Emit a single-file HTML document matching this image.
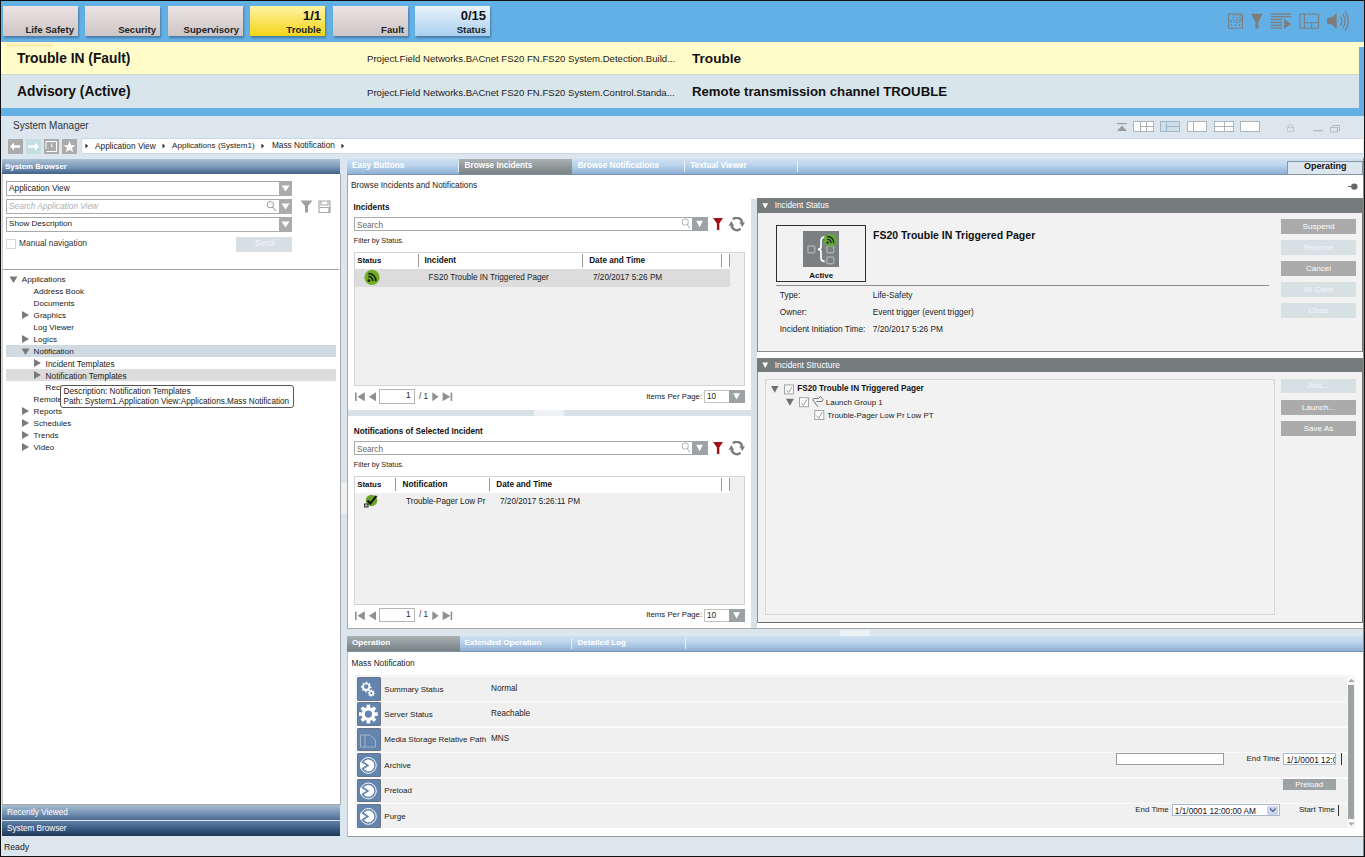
<!DOCTYPE html>
<html><head><meta charset="utf-8">
<style>
*{margin:0;padding:0;box-sizing:border-box}
html,body{width:1365px;height:857px;overflow:hidden}
body{position:relative;background:#dbe6ee;font-family:"Liberation Sans",sans-serif;color:#1a1a1a;font-size:8px}
.a{position:absolute}
.t{position:absolute;white-space:nowrap;line-height:1}
/* top bar */
#topbar{left:0;top:0;width:1365px;height:42px;background:#63b0e6;border-top:1px solid #111;border-left:1px solid #111}
.btn{position:absolute;top:6px;width:75px;height:30px;background:linear-gradient(#ece4e4,#cdc4c4);box-shadow:1px 2px 2px rgba(40,60,90,.45)}
.btn .l{position:absolute;right:4px;top:18.5px;line-height:1;font-weight:bold;font-size:9.6px;color:#222;white-space:nowrap}
.btn .n{position:absolute;right:4px;top:2.6px;line-height:1;font-weight:bold;font-size:13px;color:#111;white-space:nowrap}
.ico{position:absolute;fill:#7b7b7b;stroke:#7b7b7b}
</style></head><body>
<div class="a" style="left:0;top:0;width:1px;height:857px;background:#111;z-index:50"></div>
<div class="a" style="left:0;top:0;width:1365px;height:1px;background:#111;z-index:50"></div>
<div class="a" style="left:0;top:856px;width:1365px;height:1px;background:#111;z-index:50"></div>

<!-- TOP BAR -->
<div class="a" style="left:0;top:0;width:1365px;height:42px;background:#63b0e6"></div>
<div class="btn" style="left:3px"><span class="l">Life Safety</span></div>
<div class="btn" style="left:85px"><span class="l">Security</span></div>
<div class="btn" style="left:168px"><span class="l">Supervisory</span></div>
<div class="btn" style="left:250px;background:linear-gradient(#fff4a6,#f2d516)"><span class="n">1/1</span><span class="l">Trouble</span></div>
<div class="btn" style="left:333px"><span class="l">Fault</span></div>
<div class="btn" style="left:415px;background:linear-gradient(#eaf3fb,#a9cff0)"><span class="n">0/15</span><span class="l">Status</span></div>

<!-- top right icons -->
<svg class="a" style="left:1220px;top:8px" width="140" height="28" viewBox="1220 8 140 28">
 <g stroke="#7d7d7d" fill="none" stroke-width="1.1">
  <rect x="1228.7" y="14" width="13.8" height="14.3" rx="0.6"/>
  <circle cx="1237.6" cy="18.4" r="4.3" stroke-dasharray="1.4 0.8"/>
  <rect x="1299.8" y="14" width="18.8" height="14.2" rx="0.6"/>
  <path d="M1304.4 14V28.2 M1304.4 22.7H1318.6 M1311.5 22.7V28.2"/>
  <path d="M1340.3 16.5Q1343.6 21.2 1340.3 25.9" stroke-width="1.2"/>
  <path d="M1342.6 13.8Q1347.6 21 1342.6 28.3" stroke-width="1.2"/>
  <path d="M1345 11.3Q1351.8 21 1345 30.8" stroke-width="1.2"/>
 </g>
 <text x="1235.2" y="20.9" font-family="Liberation Sans" font-size="5.5" fill="#7d7d7d">12</text>
 <g fill="#7d7d7d">
  <circle cx="1231.2" cy="21.4" r="0.9"/><circle cx="1231.2" cy="25.1" r="0.9"/><circle cx="1235.5" cy="25.1" r="0.9"/><circle cx="1239.7" cy="25.1" r="0.9"/>
  <path d="M1251 13.8H1262.7L1258.4 22V28.4H1255.5V22Z"/>
  <rect x="1270.7" y="13.5" width="20.5" height="1.3"/><rect x="1270.7" y="16.1" width="20.5" height="1.3"/>
  <rect x="1270.7" y="18.9" width="11.3" height="1.3"/><rect x="1270.7" y="21.8" width="11.3" height="1.3"/><rect x="1270.7" y="24.7" width="11.3" height="1.3"/><rect x="1270.7" y="27.4" width="11.3" height="1.3"/>
  <path d="M1284 19.1L1291.2 23.9L1284 28.7Z"/>
  <path d="M1327.1 17.4H1331.5L1336.7 13V28.9L1331.5 24.2H1327.1Z"/>
 </g>
</svg>
<div class="a" style="left:1364px;top:0;width:1px;height:857px;background:#111;z-index:50"></div>
<!-- alert rows -->
<div class="a" style="left:1px;top:42px;width:1364px;height:32px;background:#fffcc9"></div>
<div class="a" style="left:1359px;top:47px;width:6px;height:69px;background:#63b0e6"></div>
<div class="a" style="left:1px;top:74px;width:1358px;height:34px;background:#d8e5eb;border-top:1px solid #cfd6c8"></div>
<div class="a" style="left:1px;top:108px;width:1364px;height:8px;background:#63b0e6"></div>
<div class="a" style="left:7px;top:44px;width:46px;height:3px;background:#fcecb0"></div>
<div class="t" style="left:17px;top:52px;font-size:13.8px;font-weight:bold;color:#111">Trouble IN (Fault)</div>
<div class="t" style="left:17px;top:85px;font-size:13.8px;font-weight:bold;color:#111">Advisory (Active)</div>
<div class="t" style="left:367px;top:54.2px;font-size:9.6px;color:#222">Project.Field Networks.BACnet FS20 FN.FS20 System.Detection.Build...</div>
<div class="t" style="left:367px;top:87.5px;font-size:9.6px;color:#222">Project.Field Networks.BACnet FS20 FN.FS20 System.Control.Standa...</div>
<div class="t" style="left:692px;top:52px;font-size:13.6px;font-weight:bold;color:#111">Trouble</div>
<div class="t" style="left:692px;top:85px;font-size:13.2px;font-weight:bold;color:#111">Remote transmission channel TROUBLE</div>

<!-- System manager bar -->
<div class="t" style="left:13px;top:121.2px;font-size:10px;color:#333">System Manager</div>
<!-- window icons -->
<svg class="a" style="left:1115px;top:119px" width="230" height="16" viewBox="1115 119 230 16">
 <g fill="#9a9a9a"><rect x="1117" y="123" width="10" height="1.2"/><path d="M1117 131 L1122 125.5 L1127 131Z"/></g>
 <g fill="#fdfdfd" stroke="#aeb4b8" stroke-width="1">
  <rect x="1133.5" y="121.5" width="20" height="10"/>
  <rect x="1160.5" y="121.5" width="19" height="10" fill="#cfdfea" stroke="#9fb7c9"/>
  <rect x="1187.5" y="121.5" width="19" height="10"/>
  <rect x="1214.5" y="121.5" width="19" height="10"/>
  <rect x="1240.5" y="121.5" width="19" height="10"/>
 </g>
 <g stroke="#aeb4b8" stroke-width="1" fill="none">
  <path d="M1140.5 121.5V131.5 M1140.5 126.5H1153.5 M1146.5 121.5V131.5"/>
  <path d="M1166.5 121.5V131.5 M1166.5 126.5H1179.5" stroke="#9fb7c9"/>
  <path d="M1193.5 121.5V131.5"/>
  <path d="M1214.5 126.5H1233.5 M1224.5 121.5V131.5"/>
 </g>
 <g stroke="#c4c8cb" fill="none" stroke-width="1">
  <rect x="1287.5" y="127.5" width="6" height="4"/><path d="M1288.5 127.5V125.5Q1290.5 123.5 1292.5 125.5V127.5"/>
  <rect x="1330.5" y="127.5" width="7" height="4.5" stroke="#b8bcc0"/><path d="M1332.5 127.5V125.5H1339.5V130.5H1337.5" stroke="#b8bcc0"/>
 </g>
 <rect x="1313" y="130" width="10" height="1.3" fill="#b8bcc0"/>
</svg>
<!-- nav buttons -->
<div class="a" style="left:8px;top:139px;width:15px;height:15px;background:#ababab"></div>
<div class="a" style="left:26px;top:139px;width:15px;height:15px;background:#c5dee4"></div>
<div class="a" style="left:44px;top:139px;width:15px;height:15px;background:#ababab"></div>
<div class="a" style="left:62px;top:139px;width:15px;height:15px;background:#ababab"></div>
<svg class="a" style="left:8px;top:139px" width="70" height="15" viewBox="8 139 70 15">
 <path d="M10 146.5 L14 142.5 V145.3 H20 V147.7 H14 V150.5Z" fill="#fff"/>
 <path d="M39 146.5 L35 142.5 V145.3 H28 V147.7 H35 V150.5Z" fill="#fff"/>
 <path d="M46 149 V141.5 H56.5 V151.5 H46.5" stroke="#fff" stroke-width="1" fill="none"/><path d="M51.5 143.5V146.5H53" stroke="#fff" stroke-width="0.8" fill="none"/>
 <path d="M69.5 141 L71 145.2 L75.5 145.3 L72 148 L73.3 152.3 L69.5 149.7 L65.7 152.3 L67 148 L63.5 145.3 L68 145.2Z" fill="#fff"/>
</svg>
<!-- breadcrumb -->
<div class="a" style="left:80.5px;top:138px;width:1282.5px;height:16px;background:#fff;border:1px solid #c9d8e4;border-right:none;border-radius:2px 0 0 2px"></div>
<svg class="a" style="left:80px;top:138px" width="300" height="16" viewBox="80 138 300 16">
 <g fill="#222"><path d="M85.5 143.5 L88 146 L85.5 148.5Z"/><path d="M162.5 143.5 L165 146 L162.5 148.5Z"/><path d="M261.5 143.5 L264 146 L261.5 148.5Z"/><path d="M341.5 143.5 L344 146 L341.5 148.5Z"/></g>
</svg>
<div class="t" style="left:95px;top:141.5px;font-size:8.3px;color:#222">Application View</div>
<div class="t" style="left:172px;top:141.5px;font-size:8.1px;color:#222">Applications (System1)</div>
<div class="t" style="left:272px;top:141.5px;font-size:8.25px;color:#222">Mass Notification</div>

<!-- LEFT PANEL -->
<div class="a" style="left:2px;top:158.5px;width:338px;height:15.5px;background:linear-gradient(#abc0d4,#7f9cbb 50%,#3f6089)"></div>
<div class="t" style="left:5px;top:162.5px;font-size:7.9px;font-weight:bold;color:#fff">System Browser</div>
<div class="a" style="left:2px;top:174px;width:339px;height:631px;background:#fff;border-right:1px solid #a9a9a9;border-bottom:1px solid #a9a9a9;border-left:1px solid #c8c8c8"></div>
<!-- dropdowns -->
<div class="a" style="left:6px;top:181px;width:286px;height:15px;border:1px solid #aaa;background:#fff"></div>
<div class="a" style="left:279px;top:181px;width:13px;height:15px;background:#ababab"></div>
<div class="a" style="left:6px;top:199px;width:286px;height:15px;border:1px solid #aaa;background:#fff"></div>
<div class="a" style="left:279px;top:199px;width:13px;height:15px;background:#ababab"></div>
<div class="a" style="left:6px;top:217px;width:286px;height:15px;border:1px solid #aaa;background:#fff"></div>
<div class="a" style="left:279px;top:217px;width:13px;height:15px;background:#ababab"></div>
<svg class="a" style="left:0;top:175px" width="340" height="80" viewBox="0 175 340 80">
 <g fill="#fff"><path d="M281.5 185.5H289.5L285.5 191.5Z"/><path d="M281.5 203.5H289.5L285.5 209.5Z"/><path d="M281.5 221.5H289.5L285.5 227.5Z"/></g>
 <circle cx="270.3" cy="204.6" r="3.2" stroke="#9a9a9a" stroke-width="1" fill="none"/><path d="M272.5 207L276 211" stroke="#9a9a9a" stroke-width="1.1"/>
 <path d="M300.5 200.5H312.5L308 206V212.5H305V206Z" fill="#a0a0a0"/>
 <path d="M319 201H330V212.5H319Z M321 201.5V205H328V201.5 M320 207.5H329V212" stroke="#a8a8a8" stroke-width="1.2" fill="none"/>
 <rect x="6.5" y="239.5" width="9" height="9" fill="#fff" stroke="#d6d6d6"/>
</svg>
<div class="t" style="left:9px;top:184px;font-size:8.3px;color:#222">Application View</div>
<div class="t" style="left:9px;top:202px;font-size:8.3px;color:#b0b0b0;font-style:italic">Search Application View</div>
<div class="t" style="left:9px;top:220px;font-size:8.1px;color:#222">Show Description</div>
<div class="t" style="left:19px;top:239px;font-size:8.4px;color:#333">Manual navigation</div>
<div class="a" style="left:236px;top:237px;width:56px;height:14.5px;background:#d6e0e4"></div>
<div class="t" style="left:255px;top:240px;font-size:8.2px;color:#f4f7f8">Send</div>
<div class="a" style="left:3px;top:269px;width:336px;height:1px;background:#a3a3a3"></div>
<!-- tree -->
<div class="a" style="left:6px;top:345px;width:330px;height:12px;background:#cfdae2"></div>
<div class="a" style="left:6px;top:369px;width:330px;height:12px;background:#dcdcdc"></div>
<svg class="a" style="left:0;top:270px" width="60" height="190" viewBox="0 270 60 190">
 <g fill="#7a7a7a">
  <path d="M9.5 276.5H17.5L13.5 283Z"/>
  <path d="M22 311V319L29 315Z"/>
  <path d="M22 335V343L29 339Z"/>
  <path d="M21.5 348.5H29.5L25.5 355Z"/>
  <path d="M34 359V367L41 363Z"/>
  <path d="M34 371V379L41 375Z"/>
  <path d="M22 407V415L29 411Z"/>
  <path d="M22 419V427L29 423Z"/>
  <path d="M22 431V439L29 435Z"/>
  <path d="M22 443V451L29 447Z"/>
 </g>
</svg>
<div class="t" style="left:21.8px;top:276px;font-size:8.1px;color:#222">Applications</div>
<div class="t" style="left:33.6px;top:288px;font-size:8.1px;color:#222">Address Book</div>
<div class="t" style="left:33.6px;top:300px;font-size:8.1px;color:#222">Documents</div>
<div class="t" style="left:33.6px;top:312px;font-size:8.1px;color:#222">Graphics</div>
<div class="t" style="left:33.6px;top:324px;font-size:8.1px;color:#222">Log Viewer</div>
<div class="t" style="left:33.6px;top:336px;font-size:8.1px;color:#222">Logics</div>
<div class="t" style="left:33.6px;top:348px;font-size:8.1px;color:#222">Notification</div>
<div class="t" style="left:45.6px;top:360px;font-size:8.3px;color:#222">Incident Templates</div>
<div class="t" style="left:45.6px;top:372px;font-size:8.3px;color:#222">Notification Templates</div>
<div class="t" style="left:45.6px;top:384px;font-size:8.1px;color:#222">Recipients</div>
<div class="t" style="left:33.6px;top:396px;font-size:8.1px;color:#222">Remote Notification</div>
<div class="t" style="left:33.6px;top:408px;font-size:8.1px;color:#222">Reports</div>
<div class="t" style="left:33.6px;top:420px;font-size:8.1px;color:#222">Schedules</div>
<div class="t" style="left:33.6px;top:432px;font-size:8.1px;color:#222">Trends</div>
<div class="t" style="left:33.6px;top:444px;font-size:8.1px;color:#222">Video</div>
<div class="a" style="left:60px;top:384.5px;width:234px;height:23px;background:#fff;border:1px solid #555;border-radius:3px"></div>
<div class="t" style="left:63.5px;top:386.5px;font-size:8.3px;color:#222">Description: Notification Templates</div>
<div class="t" style="left:63.5px;top:397.5px;font-size:8.17px;color:#222">Path: System1.Application View:Applications.Mass Notification</div>
<!-- bottom bars -->
<div class="a" style="left:2px;top:805px;width:338px;height:15px;background:linear-gradient(#a7bcd1,#7592b3 55%,#4a6a92)"></div>
<div class="t" style="left:7px;top:809px;font-size:8.2px;color:#fff">Recently Viewed</div>
<div class="a" style="left:2px;top:821px;width:338px;height:15px;background:linear-gradient(#5f7fa5,#3c5c84 50%,#1f3858)"></div>
<div class="t" style="left:7px;top:825px;font-size:8.2px;color:#fff">System Browser</div>
<div class="t" style="left:4px;top:843px;font-size:8.7px;color:#222">Ready</div>

<!-- MIDDLE / TAB BAR -->
<div class="a" style="left:347px;top:158.5px;width:1016px;height:16px;background:linear-gradient(#cfe1f2,#bcd4ec 40%,#8fb1d5);border-bottom:1px solid #7b93ab"></div>
<div class="a" style="left:459px;top:158.5px;width:113px;height:15.5px;background:linear-gradient(#abb2b4,#8c9597 55%,#798385)"></div>
<div class="a" style="left:458px;top:161px;width:1px;height:11px;background:#e8f0f8"></div>
<div class="a" style="left:684px;top:161px;width:1px;height:11px;background:#e8f0f8"></div>
<div class="a" style="left:797px;top:161px;width:1px;height:11px;background:#e8f0f8"></div>
<div class="t" style="left:352px;top:161.5px;font-size:8.2px;font-weight:bold;color:#fff">Easy Buttons</div>
<div class="t" style="left:464.6px;top:161.5px;font-size:8.2px;font-weight:bold;color:#fff">Browse Incidents</div>
<div class="t" style="left:577.7px;top:161.5px;font-size:8.2px;font-weight:bold;color:#fff">Browse Notifications</div>
<div class="t" style="left:690.2px;top:161.5px;font-size:8.2px;font-weight:bold;color:#fff">Textual Viewer</div>
<div class="a" style="left:1287px;top:160.5px;width:76px;height:14px;background:#dce6ee;border:1px solid #8796a2"></div>
<div class="t" style="left:1304px;top:162px;font-size:9px;font-weight:bold;color:#111">Operating</div>

<!-- middle content -->
<div class="a" style="left:347px;top:174.5px;width:1016px;height:454px;background:#fff;border-left:1px solid #a0a6aa"></div>
<div class="a" style="left:341px;top:483px;width:5.5px;height:30px;background:#f0f1f2"></div>
<div class="a" style="left:1363px;top:158px;width:2px;height:700px;background:#8a8a8a"></div>
<div class="t" style="left:351px;top:182px;font-size:8.25px;color:#222">Browse Incidents and Notifications</div>
<svg class="a" style="left:1345px;top:180px" width="16" height="14" viewBox="1345 180 16 14"><path d="M1348 186.5H1353" stroke="#666" stroke-width="1"/><circle cx="1354.3" cy="186.6" r="3.2" fill="#666"/></svg>
<!-- splitters -->
<div class="a" style="left:751px;top:199px;width:6px;height:429.5px;background:#d7e1e6"></div>
<div class="a" style="left:348px;top:410px;width:403px;height:6px;background:#d7e1e6"></div>
<div class="a" style="left:534px;top:410px;width:30px;height:6px;background:#eef2f4"></div>

<!-- incidents section -->
<div class="t" style="left:353.5px;top:203.5px;font-size:8.2px;font-weight:bold;color:#111">Incidents</div>
<div class="a" style="left:354px;top:217px;width:353.5px;height:14px;border:1px solid #aaa;background:#fff"></div>
<div class="a" style="left:692px;top:217px;width:15.5px;height:14px;background:#9da2a4"></div>
<div class="t" style="left:357px;top:221.5px;font-size:8.2px;color:#666">Search</div>
<div class="t" style="left:353.8px;top:237px;font-size:7.2px;color:#222">Filter by Status.</div>
<div class="a" style="left:354px;top:251.5px;width:391px;height:134px;background:#f0f0f0;border:1px solid #d4d4d4"></div>
<div class="a" style="left:355px;top:252.5px;width:375px;height:16px;background:#fff"></div>
<div class="a" style="left:355px;top:268.5px;width:375px;height:18px;background:#dcdcdc"></div>
<div class="a" style="left:417.5px;top:254px;width:1px;height:13px;background:#999"></div>
<div class="a" style="left:581.5px;top:254px;width:1px;height:13px;background:#999"></div>
<div class="a" style="left:721px;top:254px;width:1px;height:13px;background:#999"></div>
<div class="a" style="left:729px;top:254px;width:1px;height:13px;background:#999"></div>
<div class="t" style="left:357.2px;top:257px;font-size:7.9px;font-weight:bold;color:#111">Status</div>
<div class="t" style="left:424.6px;top:257px;font-size:8.2px;font-weight:bold;color:#111">Incident</div>
<div class="t" style="left:589.2px;top:257px;font-size:8.2px;font-weight:bold;color:#111">Date and Time</div>
<div class="t" style="left:428.6px;top:274px;font-size:8.16px;color:#222">FS20 Trouble IN Triggered Pager</div>
<div class="t" style="left:593px;top:274px;font-size:8.2px;color:#222">7/20/2017 5:26 PM</div>
<svg class="a" style="left:364px;top:269px" width="17" height="17" viewBox="0 0 17 17"><circle cx="8" cy="8.3" r="7.6" fill="#72ad22"/><circle cx="5" cy="11.5" r="1.5" fill="#1a2a10"/><path d="M4.3 7.7A4 4 0 0 1 8.8 12.2M4.3 4.6A7.1 7.1 0 0 1 11.9 12.2" stroke="#1a2a10" stroke-width="1.7" fill="none"/></svg>

<!-- notifications section -->
<div class="t" style="left:353.8px;top:427.5px;font-size:8.19px;font-weight:bold;color:#111">Notifications of Selected Incident</div>
<div class="a" style="left:354px;top:441px;width:353.5px;height:14px;border:1px solid #aaa;background:#fff"></div>
<div class="a" style="left:692px;top:441px;width:15.5px;height:14px;background:#9da2a4"></div>
<div class="t" style="left:357px;top:445.5px;font-size:8.2px;color:#666">Search</div>
<div class="t" style="left:353.8px;top:461px;font-size:7.2px;color:#222">Filter by Status.</div>
<div class="a" style="left:354px;top:476px;width:391px;height:128.5px;background:#f0f0f0;border:1px solid #d4d4d4"></div>
<div class="a" style="left:355px;top:477px;width:375px;height:16px;background:#fff"></div>
<div class="a" style="left:394.8px;top:478px;width:1px;height:13px;background:#999"></div>
<div class="a" style="left:488.6px;top:478px;width:1px;height:13px;background:#999"></div>
<div class="a" style="left:721px;top:478px;width:1px;height:13px;background:#999"></div>
<div class="a" style="left:729px;top:478px;width:1px;height:13px;background:#999"></div>
<div class="t" style="left:357.2px;top:481px;font-size:7.9px;font-weight:bold;color:#111">Status</div>
<div class="t" style="left:402.5px;top:481px;font-size:8.2px;font-weight:bold;color:#111">Notification</div>
<div class="t" style="left:496.3px;top:481px;font-size:8.2px;font-weight:bold;color:#111">Date and Time</div>
<div class="t" style="left:406px;top:498px;font-size:8.16px;color:#222">Trouble-Pager Low Pr</div>
<div class="t" style="left:500px;top:498px;font-size:8.2px;color:#222">7/20/2017 5:26:11 PM</div>
<svg class="a" style="left:363px;top:494px" width="16" height="15" viewBox="0 0 16 15"><circle cx="8.5" cy="6.5" r="5.8" fill="#6ba42a"/><path d="M4.5 6.5L7.3 9.5L13.5 1.8" stroke="#111" stroke-width="2" fill="none"/><rect x="1" y="9.5" width="4.5" height="4" fill="#333"/><rect x="2" y="10.5" width="2.5" height="2" fill="#bbb"/></svg>

<!-- tools & pagers -->
<svg class="a" style="left:680px;top:217px" width="66" height="15" viewBox="680 217 66 15">
 <circle cx="685.2" cy="222" r="3.2" stroke="#a8a8a8" stroke-width="0.9" fill="none"/><path d="M687.3 224.5L690 228.6" stroke="#a8a8a8" stroke-width="0.9"/>
 <path d="M696.3 220.8H702.9L699.6 227.3Z" fill="#fff"/>
 <path d="M713.1 217.9H723L719.3 223.5V230H716.9V223.5Z" fill="#a30f12"/>
 <path d="M733 219.3A5.4 5.4 0 0 1 742.1 222.6" stroke="#7a7f7f" stroke-width="2.4" fill="none"/><path d="M739.4 222.2H745L742.3 227Z" fill="#7a7f7f"/>
 <path d="M740.6 228.7A5.4 5.4 0 0 1 731.5 225.4" stroke="#7a7f7f" stroke-width="2.4" fill="none"/><path d="M728.6 225.8H734.2L731.3 221Z" fill="#7a7f7f"/>
</svg>
<svg class="a" style="left:680px;top:441px" width="66" height="15" viewBox="680 217 66 15">
 <circle cx="685.2" cy="222" r="3.2" stroke="#a8a8a8" stroke-width="0.9" fill="none"/><path d="M687.3 224.5L690 228.6" stroke="#a8a8a8" stroke-width="0.9"/>
 <path d="M696.3 220.8H702.9L699.6 227.3Z" fill="#fff"/>
 <path d="M713.1 217.9H723L719.3 223.5V230H716.9V223.5Z" fill="#a30f12"/>
 <path d="M733 219.3A5.4 5.4 0 0 1 742.1 222.6" stroke="#7a7f7f" stroke-width="2.4" fill="none"/><path d="M739.4 222.2H745L742.3 227Z" fill="#7a7f7f"/>
 <path d="M740.6 228.7A5.4 5.4 0 0 1 731.5 225.4" stroke="#7a7f7f" stroke-width="2.4" fill="none"/><path d="M728.6 225.8H734.2L731.3 221Z" fill="#7a7f7f"/>
</svg>
<div class="a" style="left:379.3px;top:389px;width:36px;height:14.5px;border:1px solid #b5b5b5;background:#fff"></div>
<div class="t" style="left:406px;top:392px;font-size:8.2px;color:#222">1</div>
<div class="t" style="left:419px;top:392.5px;font-size:8.2px;color:#333">/ 1</div>
<svg class="a" style="left:354px;top:389px" width="100" height="15" viewBox="354 389 100 15">
 <g fill="#909090"><rect x="355" y="392.5" width="1.6" height="8.5"/><path d="M364.8 392.3V401.2L357.5 396.8Z"/>
 <path d="M376 392.3V401.2L368.8 396.8Z"/>
 <path d="M432.3 392.3V401.2L438.6 396.8Z"/>
 <path d="M442.6 392.3V401.2L450.4 396.8Z"/><rect x="450.6" y="392.5" width="1.6" height="8.5"/></g>
</svg>
<div class="t" style="left:646.2px;top:392.5px;font-size:7.8px;color:#222">Items Per Page:</div>
<div class="a" style="left:704.2px;top:390px;width:40.6px;height:13px;border:1px solid #c3c3c3;background:#fff"></div>
<div class="a" style="left:729px;top:390px;width:15.8px;height:13px;background:#9ca1a3"></div>
<svg class="a" style="left:729px;top:390px" width="16" height="13" viewBox="0 0 16 13"><path d="M4.2 3.3H11L7.6 9.5Z" fill="#fff"/></svg>
<div class="t" style="left:707px;top:393px;font-size:8.2px;color:#222">10</div>
<div class="a" style="left:379.3px;top:607.5px;width:36px;height:14.5px;border:1px solid #b5b5b5;background:#fff"></div>
<div class="t" style="left:406px;top:610.5px;font-size:8.2px;color:#222">1</div>
<div class="t" style="left:419px;top:611.0px;font-size:8.2px;color:#333">/ 1</div>
<svg class="a" style="left:354px;top:607.5px" width="100" height="15" viewBox="354 389 100 15">
 <g fill="#909090"><rect x="355" y="392.5" width="1.6" height="8.5"/><path d="M364.8 392.3V401.2L357.5 396.8Z"/>
 <path d="M376 392.3V401.2L368.8 396.8Z"/>
 <path d="M432.3 392.3V401.2L438.6 396.8Z"/>
 <path d="M442.6 392.3V401.2L450.4 396.8Z"/><rect x="450.6" y="392.5" width="1.6" height="8.5"/></g>
</svg>
<div class="t" style="left:646.2px;top:611.0px;font-size:7.8px;color:#222">Items Per Page:</div>
<div class="a" style="left:704.2px;top:608.5px;width:40.6px;height:13px;border:1px solid #c3c3c3;background:#fff"></div>
<div class="a" style="left:729px;top:608.5px;width:15.8px;height:13px;background:#9ca1a3"></div>
<svg class="a" style="left:729px;top:608.5px" width="16" height="13" viewBox="0 0 16 13"><path d="M4.2 3.3H11L7.6 9.5Z" fill="#fff"/></svg>
<div class="t" style="left:707px;top:611.5px;font-size:8.2px;color:#222">10</div>
<!-- RIGHT PANEL: incident status -->
<div class="a" style="left:757px;top:198px;width:606px;height:153.5px;background:#f2f2f2;border-left:1px solid #8a8f92;border-right:1px solid #707070;border-bottom:1px solid #8a8a8a"></div>
<div class="a" style="left:757px;top:198px;width:606px;height:15px;background:#767b7e"></div>
<svg class="a" style="left:760px;top:200px" width="12" height="12" viewBox="760 200 12 12"><path d="M762.3 203.3H768.2L765.25 208.6Z" fill="#fff"/></svg>
<div class="t" style="left:774.8px;top:201.5px;font-size:8.17px;color:#fff">Incident Status</div>
<div class="a" style="left:776px;top:225px;width:90px;height:57px;background:#f2f2f2;border:1.3px solid #2e2e2e"></div>
<svg class="a" style="left:803px;top:231px" width="37" height="37" viewBox="0 0 37 37">
 <rect x="0" y="0" width="36" height="36" fill="#7b7f82"/>
 <g stroke="#abaeb0" stroke-width="1.4" fill="none"><rect x="4.9" y="15" width="6.8" height="6.8" rx="1"/><rect x="23.9" y="15" width="6.8" height="6.8" rx="1"/><rect x="23.9" y="26" width="6.8" height="6.8" rx="1"/></g>
 <path d="M21.7 6Q18 6 18 10V15.5Q18 18.4 15 18.4Q18 18.4 18 21.3V26.5Q18 30.4 21.7 30.4" stroke="#fff" stroke-width="1.7" fill="none"/>
 <circle cx="27.3" cy="9.1" r="6.7" fill="#62a83a"/>
 <circle cx="24.6" cy="11.6" r="1.2" fill="#1e2a18"/><path d="M24.1 8.4A3.3 3.3 0 0 1 27.9 12.2M24.1 5.6A6 6 0 0 1 30.7 12.2" stroke="#1e2a18" stroke-width="1.4" fill="none"/>
</svg>
<div class="t" style="left:809.2px;top:271.8px;font-size:8px;font-weight:bold;color:#111">Active</div>
<div class="t" style="left:873px;top:230px;font-size:10.5px;font-weight:bold;color:#111">FS20 Trouble IN Triggered Pager</div>
<div class="a" style="left:776px;top:285px;width:493px;height:1px;background:#8c8c8c"></div>
<div class="t" style="left:779.8px;top:290.5px;font-size:8.4px;color:#222">Type:</div>
<div class="t" style="left:779.8px;top:307.5px;font-size:8.4px;color:#222">Owner:</div>
<div class="t" style="left:779.8px;top:324.5px;font-size:8.4px;color:#222">Incident Initiation Time:</div>
<div class="t" style="left:872.8px;top:290.5px;font-size:8.3px;color:#222">Life-Safety</div>
<div class="t" style="left:872.8px;top:307.5px;font-size:8.3px;color:#222">Event trigger (event trigger)</div>
<div class="t" style="left:872.8px;top:324.5px;font-size:8.3px;color:#222">7/20/2017 5:26 PM</div>
<div class="a" style="left:1281px;top:219px;width:75px;height:15px;background:#ababab"></div>
<div class="a" style="left:1281px;top:240.3px;width:75px;height:15px;background:#d7e1e4"></div>
<div class="a" style="left:1281px;top:261.4px;width:75px;height:15px;background:#ababab"></div>
<div class="a" style="left:1281px;top:282.3px;width:75px;height:15px;background:#d7e1e4"></div>
<div class="a" style="left:1281px;top:303.4px;width:75px;height:15px;background:#d7e1e4"></div>
<div class="t" style="left:1281px;width:75px;text-align:center;top:222.7px;font-size:8.1px;color:#fff">Suspend</div>
<div class="t" style="left:1281px;width:75px;text-align:center;top:244.0px;font-size:8.1px;color:#f3f6f7">Resume</div>
<div class="t" style="left:1281px;width:75px;text-align:center;top:265.1px;font-size:8.1px;color:#fff">Cancel</div>
<div class="t" style="left:1281px;width:75px;text-align:center;top:286.0px;font-size:8.1px;color:#f3f6f7">All Clear</div>
<div class="t" style="left:1281px;width:75px;text-align:center;top:307.1px;font-size:8.1px;color:#f3f6f7">Close</div>

<!-- incident structure -->
<div class="a" style="left:757px;top:357.6px;width:606px;height:265px;background:#f2f2f2;border-left:1px solid #8a8f92;border-right:1px solid #707070;border-bottom:1.3px solid #707070"></div>
<div class="a" style="left:757px;top:357.6px;width:606px;height:14.4px;background:#767b7e"></div>
<svg class="a" style="left:760px;top:359px" width="12" height="12" viewBox="760 359 12 12"><path d="M762.3 362.5H768.2L765.25 367.9Z" fill="#fff"/></svg>
<div class="t" style="left:774.8px;top:360.8px;font-size:8.3px;color:#fff">Incident Structure</div>
<div class="a" style="left:764.5px;top:378.6px;width:510.5px;height:236.5px;border:1px solid #d6d6d6"></div>
<svg class="a" style="left:764px;top:380px" width="70" height="45" viewBox="764 380 70 45">
 <g fill="#707070"><path d="M771.1 385.9H778.4L774.75 392.8Z"/><path d="M786 398.8H793.8L789.9 405.7Z"/></g>
 <g fill="#fbfbfb" stroke="#a5a5a5" stroke-width="1"><rect x="784.5" y="384.9" width="9" height="9"/><rect x="799.5" y="397.7" width="9" height="9"/><rect x="814.8" y="410.5" width="9" height="9"/></g>
 <g stroke="#9aa0a3" stroke-width="1" fill="none"><path d="M786.6 390.2L788.6 392.6L792 386.8"/><path d="M801.3 403L803.4 405.5L806.8 399.5"/><path d="M816.8 415.8L818.8 418.3L822.2 412.3"/></g>
 <path d="M817.7 406.7L812.9 399.7L813.6 398.5H818.7L820.4 396.4L823 399.5L821.9 401.5H816.4" stroke="#6a6a6a" stroke-width="0.9" fill="none" stroke-linejoin="round"/>
</svg>
<div class="t" style="left:797.2px;top:385px;font-size:8.2px;font-weight:bold;color:#111">FS20 Trouble IN Triggered Pager</div>
<div class="t" style="left:825.8px;top:398.8px;font-size:7.95px;color:#222">Launch Group 1</div>
<div class="t" style="left:827.2px;top:411.5px;font-size:7.95px;color:#222">Trouble-Pager Low Pr Low PT</div>
<div class="a" style="left:1281px;top:378.7px;width:75px;height:14.5px;background:#d7e1e4"></div>
<div class="a" style="left:1281px;top:400px;width:75px;height:14.5px;background:#ababab"></div>
<div class="a" style="left:1281px;top:421px;width:75px;height:14.5px;background:#ababab"></div>
<div class="t" style="left:1281px;width:75px;text-align:center;top:382.2px;font-size:8.1px;color:#f3f6f7">Add...</div>
<div class="t" style="left:1281px;width:75px;text-align:center;top:403.5px;font-size:8.1px;color:#fff">Launch...</div>
<div class="t" style="left:1281px;width:75px;text-align:center;top:424.5px;font-size:8.1px;color:#fff">Save As</div>

<!-- OPERATION SECTION -->
<div class="a" style="left:347px;top:628.2px;width:1016px;height:1px;background:#a9a9a9"></div>
<div class="a" style="left:840px;top:629.5px;width:30px;height:6px;background:#eef2f4"></div>
<div class="a" style="left:347px;top:635.5px;width:1016px;height:16px;background:linear-gradient(#cfe1f2,#bcd4ec 40%,#8fb1d5);border-bottom:1px solid #7b93ab"></div>
<div class="a" style="left:347px;top:635.5px;width:112.5px;height:15.5px;background:linear-gradient(#abb2b4,#8c9597 55%,#798385)"></div>
<div class="a" style="left:571.3px;top:638px;width:1px;height:11px;background:#e8f0f8"></div>
<div class="a" style="left:684.5px;top:638px;width:1px;height:11px;background:#e8f0f8"></div>
<div class="t" style="left:352px;top:638.5px;font-size:8.1px;font-weight:bold;color:#fff">Operation</div>
<div class="t" style="left:464.6px;top:638.5px;font-size:8.1px;font-weight:bold;color:#fff">Extended Operation</div>
<div class="t" style="left:577.4px;top:638.5px;font-size:8.1px;font-weight:bold;color:#fff">Detailed Log</div>
<div class="a" style="left:347px;top:651.5px;width:1016px;height:185px;background:#fff;border-left:1px solid #b8c0c6;border-bottom:1px solid #9a9a9a"></div>
<div class="t" style="left:351.5px;top:659px;font-size:8.3px;color:#222">Mass Notification</div>
<div class="a" style="left:355.3px;top:675.3px;width:1000px;height:153px;background:#fafafa;border:1px solid #f2f2f2"></div>
<div class="a" style="left:356.5px;top:677px;width:990px;height:24px;background:#f0f0f0"></div>
<div class="a" style="left:357.2px;top:677px;width:23.6px;height:23.6px;background:#6384ad;border-radius:2px;box-shadow:inset 0 0 0 0.8px #6a717a"></div>
<div class="t" style="left:384.3px;top:685.5px;font-size:8px;color:#222">Summary Status</div>
<div class="t" style="left:491px;top:684.5px;font-size:8.2px;color:#222">Normal</div>
<div class="a" style="left:356.5px;top:702.3px;width:990px;height:24px;background:#f0f0f0"></div>
<div class="a" style="left:357.2px;top:702.3px;width:23.6px;height:23.6px;background:#6384ad;border-radius:2px;box-shadow:inset 0 0 0 0.8px #6a717a"></div>
<div class="t" style="left:384.3px;top:710.8px;font-size:8px;color:#222">Server Status</div>
<div class="t" style="left:491px;top:709.8px;font-size:8.2px;color:#222">Reachable</div>
<div class="a" style="left:356.5px;top:727.8px;width:990px;height:24px;background:#f0f0f0"></div>
<div class="a" style="left:357.2px;top:727.8px;width:23.6px;height:23.6px;background:#6384ad;border-radius:2px;box-shadow:inset 0 0 0 0.8px #6a717a"></div>
<div class="t" style="left:384.3px;top:736.3px;font-size:8px;color:#222">Media Storage Relative Path</div>
<div class="t" style="left:491px;top:735.3px;font-size:8.2px;color:#222">MNS</div>
<div class="a" style="left:356.5px;top:753.3px;width:990px;height:24px;background:#f0f0f0"></div>
<div class="a" style="left:357.2px;top:753.3px;width:23.6px;height:23.6px;background:#6384ad;border-radius:2px;box-shadow:inset 0 0 0 0.8px #6a717a"></div>
<div class="t" style="left:384.3px;top:761.8px;font-size:8px;color:#222">Archive</div>
<div class="a" style="left:356.5px;top:778.8px;width:990px;height:24px;background:#f0f0f0"></div>
<div class="a" style="left:357.2px;top:778.8px;width:23.6px;height:23.6px;background:#6384ad;border-radius:2px;box-shadow:inset 0 0 0 0.8px #6a717a"></div>
<div class="t" style="left:384.3px;top:787.3px;font-size:8px;color:#222">Preload</div>
<div class="a" style="left:356.5px;top:804.3px;width:990px;height:24px;background:#f0f0f0"></div>
<div class="a" style="left:357.2px;top:804.3px;width:23.6px;height:23.6px;background:#6384ad;border-radius:2px;box-shadow:inset 0 0 0 0.8px #6a717a"></div>
<div class="t" style="left:384.3px;top:812.8px;font-size:8px;color:#222">Purge</div>
<svg class="a" style="left:357px;top:677px" width="24" height="152" viewBox="357 677 24 152">
 <g fill="#fff">
  <path id="g1" d="M0 -4.6L1.1 -4.4L1.4 -3.1L2.6 -2.5L3.8 -3.2L4.5 -2.3L3.8 -1.1L4.3 0.1L5.6 0.6L5.4 1.7L4.1 2L3.5 3.2L4.2 4.4L3.3 5.1L2.1 4.4L0.9 4.9L0.4 6.2L-0.7 6L-1 4.7L-2.2 4.1L-3.4 4.8L-4.1 3.9L-3.4 2.7L-3.9 1.5L-5.2 1L-5 -0.1L-3.7 -0.4L-3.1 -1.6L-3.8 -2.8L-2.9 -3.5L-1.7 -2.8L-0.5 -3.3Z" transform="translate(366,686.2) scale(1)"/>
 </g>
 <circle cx="366.2" cy="686.6" r="2.3" fill="#6384ad"/>
 <g transform="translate(371.2,692.6) scale(0.68)"><path d="M0 -4.6L1.1 -4.4L1.4 -3.1L2.6 -2.5L3.8 -3.2L4.5 -2.3L3.8 -1.1L4.3 0.1L5.6 0.6L5.4 1.7L4.1 2L3.5 3.2L4.2 4.4L3.3 5.1L2.1 4.4L0.9 4.9L0.4 6.2L-0.7 6L-1 4.7L-2.2 4.1L-3.4 4.8L-4.1 3.9L-3.4 2.7L-3.9 1.5L-5.2 1L-5 -0.1L-3.7 -0.4L-3.1 -1.6L-3.8 -2.8L-2.9 -3.5L-1.7 -2.8L-0.5 -3.3Z" fill="#fff"/><circle cx="0.2" cy="0.7" r="1.7" fill="#6384ad"/></g>
 <g transform="translate(368.4,714.1)">
  <circle r="6.8" fill="#fff"/>
  <g fill="#fff"><rect x="-1.8" y="-9.4" width="3.6" height="3.5"/><rect x="-1.8" y="5.9" width="3.6" height="3.5"/><rect x="-9.4" y="-1.8" width="3.5" height="3.6"/><rect x="5.9" y="-1.8" width="3.5" height="3.6"/>
  <rect x="-1.8" y="-9.4" width="3.6" height="3.5" transform="rotate(45)"/><rect x="-1.8" y="5.9" width="3.6" height="3.5" transform="rotate(45)"/><rect x="-9.4" y="-1.8" width="3.5" height="3.6" transform="rotate(45)"/><rect x="5.9" y="-1.8" width="3.5" height="3.6" transform="rotate(45)"/></g>
  <circle r="3.6" fill="#6384ad"/>
 </g>
 <path d="M360.5 747V735H369.8L375.5 740V747Z M365 735V747" stroke="#a9bbd3" stroke-width="0.9" fill="none"/>
 <circle cx="368.35" cy="765.40" r="7.9" stroke="#fff" stroke-width="1" fill="none"/><path d="M369.45 765.40L363.70 761.77A5.9 5.9 0 1 1 363.70 769.03Z" fill="#fff"/><path d="M360.4 761.70V769.10L366.3 765.40Z" fill="#fff"/>
 <circle cx="368.35" cy="790.90" r="7.9" stroke="#fff" stroke-width="1" fill="none"/><path d="M369.45 790.90L363.70 787.27A5.9 5.9 0 1 1 363.70 794.53Z" fill="#fff"/><path d="M360.4 787.20V794.60L366.3 790.90Z" fill="#fff"/>
 <circle cx="368.35" cy="816.40" r="7.9" stroke="#fff" stroke-width="1" fill="none"/><path d="M369.45 816.40L363.70 812.77A5.9 5.9 0 1 1 363.70 820.03Z" fill="#fff"/><path d="M360.4 812.70V820.10L366.3 816.40Z" fill="#fff"/>
</svg>
<!-- archive/purge controls -->
<div class="a" style="left:1116px;top:753.2px;width:108px;height:11.5px;background:#fff;border:1px solid #9a9a9a"></div>
<div class="t" style="left:1246.6px;top:754.5px;font-size:7.9px;color:#222">End Time</div>
<div class="a" style="left:1283px;top:752.8px;width:53px;height:12px;background:#fff;border:1px solid #a7b9d1;overflow:hidden"><span class="t" style="left:2.5px;top:2.5px;font-size:8.3px;color:#111">1/1/0001 12:00</span></div>
<div class="a" style="left:1340.5px;top:753px;width:1px;height:11.5px;background:#333"></div>
<div class="a" style="left:1283px;top:779.2px;width:52.5px;height:11px;background:#9da2a5"></div>
<div class="t" style="left:1283px;width:52.5px;text-align:center;top:781px;font-size:8.1px;color:#fff">Preload</div>
<div class="t" style="left:1135.3px;top:805.5px;font-size:7.9px;color:#222">End Time</div>
<div class="a" style="left:1171.8px;top:804.4px;width:108px;height:11.6px;background:#fff;border:1px solid #a7b9d1"></div>
<div class="t" style="left:1174.8px;top:807.3px;font-size:8.3px;color:#111">1/1/0001 12:00:00 AM</div>
<div class="a" style="left:1267.4px;top:805.5px;width:11px;height:9.5px;background:#c9d3ee;border-radius:1px"></div>
<svg class="a" style="left:1267px;top:805px" width="12" height="10" viewBox="0 0 12 10"><path d="M3 3.5L5.8 6.3L8.6 3.5" stroke="#4a5a8a" stroke-width="1.2" fill="none"/></svg>
<div class="t" style="left:1299px;top:805.5px;font-size:7.9px;color:#222">Start Time</div>
<div class="a" style="left:1338.4px;top:804.5px;width:1px;height:11.5px;background:#333"></div>
<!-- scrollbar -->
<div class="a" style="left:1348.4px;top:685px;width:6px;height:134px;background:#9da2a4"></div>
<svg class="a" style="left:1346px;top:676px" width="10" height="152" viewBox="1346 676 10 152"><path d="M1348.2 682H1354.6L1351.4 678.8Z" fill="#a9a9a9"/><path d="M1348.2 822.5H1354.6L1351.4 825.7Z" fill="#a9a9a9"/></svg>
</body></html>
